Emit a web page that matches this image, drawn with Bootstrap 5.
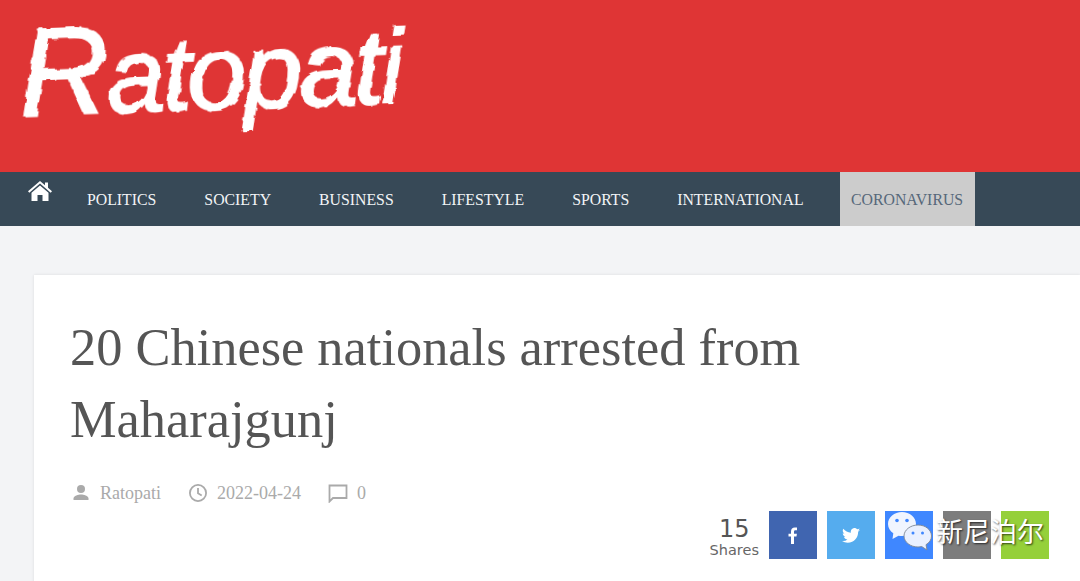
<!DOCTYPE html>
<html lang="en">
  <head>
    <meta charset="UTF-8" />
    <meta name="viewport" content="width=device-width, initial-scale=1.0" />
    <title>20 Chinese nationals arrested from Maharajgunj</title>
    <link href="https://cdn.jsdelivr.net/npm/bootstrap@5.3.3/dist/css/bootstrap.min.css" rel="stylesheet" />
    <style>
      html, body { height: 581px; overflow: hidden; }
      body { background-color: #f3f4f6; font-family: "Liberation Serif", serif; }
      .site-head { background-color: #df3535; height: 172px; padding-left: 22px; }
      .site-logo {
        display: inline-block;
        color: #fff;
        font-family: "Liberation Sans", sans-serif;
        font-style: italic;
        font-size: 105px;
        line-height: 159px;
        letter-spacing: -3px;
        -webkit-text-stroke: 2px #fff;
        text-decoration: none;
        transform: rotate(-2deg);
        transform-origin: left bottom;
        filter: url(#brush-edge);
      }
      .site-logo:hover { color: #fff; }
      .logo-cap { font-size: 125px; line-height: 100px; }
      .site-nav { background-color: #374957; height: 54px; padding-left: 28px; }
      .home-link { width: 24px; height: 36px; margin-right: 11px; padding-top: 6px; }
      .site-nav .nav-link {
        color: #f2f4f6;
        font-size: 15.8px;
        line-height: 53px;
        padding: 1px 24px 0;
        text-transform: uppercase;
      }
      .site-nav .nav-link.is-hot { background-color: #ccc; color: #56687a; padding: 1px 11.500px 0; margin-left: 12px; }
      .story-box {
        background-color: #fff;
        margin: 49px 0 0 34px;
        padding: 36px 31px 60px 37px;
        box-shadow: 0 0 3px rgba(0, 0, 0, 0.1);
        height: 400px;
      }
      .story-title { color: #555; font-family: "Liberation Serif", serif; font-size: 52.4px; line-height: 72px; margin: 0 0 0 -1px; max-width: 780px; }
      .story-meta { color: #aaa; font-size: 18px; line-height: 22px; margin-top: 27px; gap: 27px; }
      .story-meta svg { display: block; }
      .meta-item { gap: 9px; }
      .share-row { gap: 10px; margin-top: 7px; position: relative; }
      .share-count { color: #555; font-family: "DejaVu Sans", sans-serif; text-align: center; padding-top: 4px; }
      .share-count b { display: block; font-weight: 400; font-size: 24px; line-height: 25px; }
      .share-count span { display: block; color: #666; font-size: 14.500px; line-height: 16px; }
      .share-btn { width: 48px; height: 48px; }
      .share-fb { background-color: #4065b0; }
      .share-tw { background-color: #55acee; }
      .share-wc { background-color: #3f87ff; }
      .share-gr { background-color: #7d7d7d; }
      .share-ln { background-color: #95d03a; }
      .wm-mark { position: absolute; right: 5px; top: 0; gap: 3px; }
      .wm-text { color: #fff; font-family: "Noto Sans CJK SC", sans-serif; font-size: 27px; line-height: 40px; text-shadow: 1px 1px 2px rgba(0, 0, 0, 0.7); white-space: nowrap; }
    </style>
  </head>
  <body>
    <!-- Logo edge filter -->
    <svg width="0" height="0" class="position-absolute">
      <filter id="brush-edge" x="-5%" y="-5%" width="110%" height="110%">
        <feTurbulence type="fractalNoise" baseFrequency="0.09" numOctaves="2" seed="4" />
        <feDisplacementMap in="SourceGraphic" scale="5" />
      </filter>
    </svg>

    <!-- Header -->
    <header class="site-head">
      <a class="site-logo" href="#"><span class="logo-cap">R</span>atopati</a>
    </header>

    <!-- Nav -->
    <nav class="site-nav d-flex align-items-start">
      <a class="home-link d-block" href="#" aria-label="Home">
        <svg width="24" height="20" viewBox="0 0 24 20" fill="#fff">
          <path d="M12 0 0 10.200l1.300 1.500L12 2.600l10.700 9.100 1.300-1.500-4-3.400V1.500h-3v2.700z" />
          <path d="M12 4.600 3.500 11.800V20h6v-6h5v6h6v-8.200z" />
        </svg>
      </a>
      <ul class="nav flex-nowrap">
        <li class="nav-item"><a class="nav-link" href="#">Politics</a></li>
        <li class="nav-item"><a class="nav-link" href="#">Society</a></li>
        <li class="nav-item"><a class="nav-link" href="#">Business</a></li>
        <li class="nav-item"><a class="nav-link" href="#">Lifestyle</a></li>
        <li class="nav-item"><a class="nav-link" href="#">Sports</a></li>
        <li class="nav-item"><a class="nav-link" href="#">International</a></li>
        <li class="nav-item"><a class="nav-link is-hot" href="#">Coronavirus</a></li>
      </ul>
    </nav>

    <!-- Story -->
    <main class="story-box">
      <h1 class="story-title">20 Chinese nationals arrested from Maharajgunj</h1>
      <div class="story-meta d-flex align-items-center">
        <div class="meta-item d-flex align-items-center">
          <svg width="20" height="20" viewBox="0 0 20 20" fill="#aaa"><circle cx="10" cy="6" r="4" /><path d="M2.500 17v-1.500c0-2.800 5-4 7.500-4s7.500 1.200 7.500 4V17z" /></svg>
          <span>Ratopati</span>
        </div>
        <div class="meta-item d-flex align-items-center">
          <svg width="20" height="20" viewBox="0 0 20 20" fill="none" stroke="#aaa" stroke-width="1.800"><circle cx="10" cy="10" r="8.100" /><path d="M10 5v5.300l3.700 2.200" /></svg>
          <span>2022-04-24</span>
        </div>
        <div class="meta-item d-flex align-items-center">
          <svg width="20" height="20" viewBox="0 0 20 20" fill="none" stroke="#aaa" stroke-width="1.800"><path d="M1.500 2.500h17v12.500H5l-3.500 3.500z" /></svg>
          <span>0</span>
        </div>
      </div>
      <div class="share-row d-flex justify-content-end align-items-center">
        <div class="share-count"><b>15</b><span>Shares</span></div>
        <a class="share-btn share-fb d-flex align-items-center justify-content-center" href="#" aria-label="Facebook">
          <svg width="10" height="17" viewBox="0 0 10 17" fill="#fff"><path d="M3 17V9.500H.5V6.700H3V4.600C3 2 4.500.5 6.800.5c1 0 1.900.1 2.200.1V3.200H7.500C6.300 3.200 6 3.800 6 4.700v2h2.900l-.4 2.800H6V17z" /></svg>
        </a>
        <a class="share-btn share-tw d-flex align-items-center justify-content-center" href="#" aria-label="Twitter">
          <svg width="18" height="15" viewBox="0 0 24 20" fill="#fff"><path d="M24 2.400c-.9.400-1.800.7-2.800.8 1-.6 1.800-1.600 2.200-2.700-1 .6-2 1-3.100 1.200A4.900 4.900 0 0 0 11.900 6.200C7.800 6 4.200 4 1.700.9c-.4.700-.7 1.600-.7 2.500 0 1.700.9 3.200 2.200 4.100-.8 0-1.600-.2-2.200-.6 0 2.400 1.700 4.400 3.900 4.900-.7.200-1.500.2-2.200.1.600 2 2.400 3.400 4.600 3.400A9.900 9.900 0 0 1 0 17.300 14 14 0 0 0 7.500 19.500c9.100 0 14-7.500 14-14v-.6c1-.7 1.900-1.600 2.500-2.500z" /></svg>
        </a>
        <a class="share-btn share-wc d-block" href="#" aria-label="WeChat"></a>
        <a class="share-btn share-gr d-block" href="#" aria-label="Share"></a>
        <a class="share-btn share-ln d-block" href="#" aria-label="Line"></a>
        <!-- Watermark over the buttons -->
        <div class="wm-mark d-flex align-items-start">
          <svg width="46" height="42" viewBox="0 0 46 42">
            <path d="M15 1C7.300 1 1 6.300 1 13c0 3.800 2.100 7 5.300 9.300L5.500 28l6-3.200c1.100.2 2.300.3 3.500.3 7.700 0 14-5.400 14-12.100S22.700 1 15 1z" fill="#f0f5ff" />
            <circle cx="10" cy="9.500" r="1.800" fill="#3f87ff" />
            <circle cx="20" cy="9.500" r="1.800" fill="#3f87ff" />
            <path d="M31 14c-7.500 0-14 4.900-14 11s6.500 11 14 11c1.300 0 2.500-.2 3.700-.5l5.300 3.500-1-5.300c3.500-2 5.500-5.100 5.500-8.700C44.500 18.900 38.500 14 31 14z" fill="#e9f0ff" stroke="#7d8794" stroke-width=".9" />
            <circle cx="26" cy="22" r="1.500" fill="#3f87ff" />
            <circle cx="35.500" cy="22" r="1.500" fill="#3f87ff" />
          </svg>
          <span class="wm-text">新尼泊尔</span>
        </div>
      </div>
    </main>
  </body>
</html>
